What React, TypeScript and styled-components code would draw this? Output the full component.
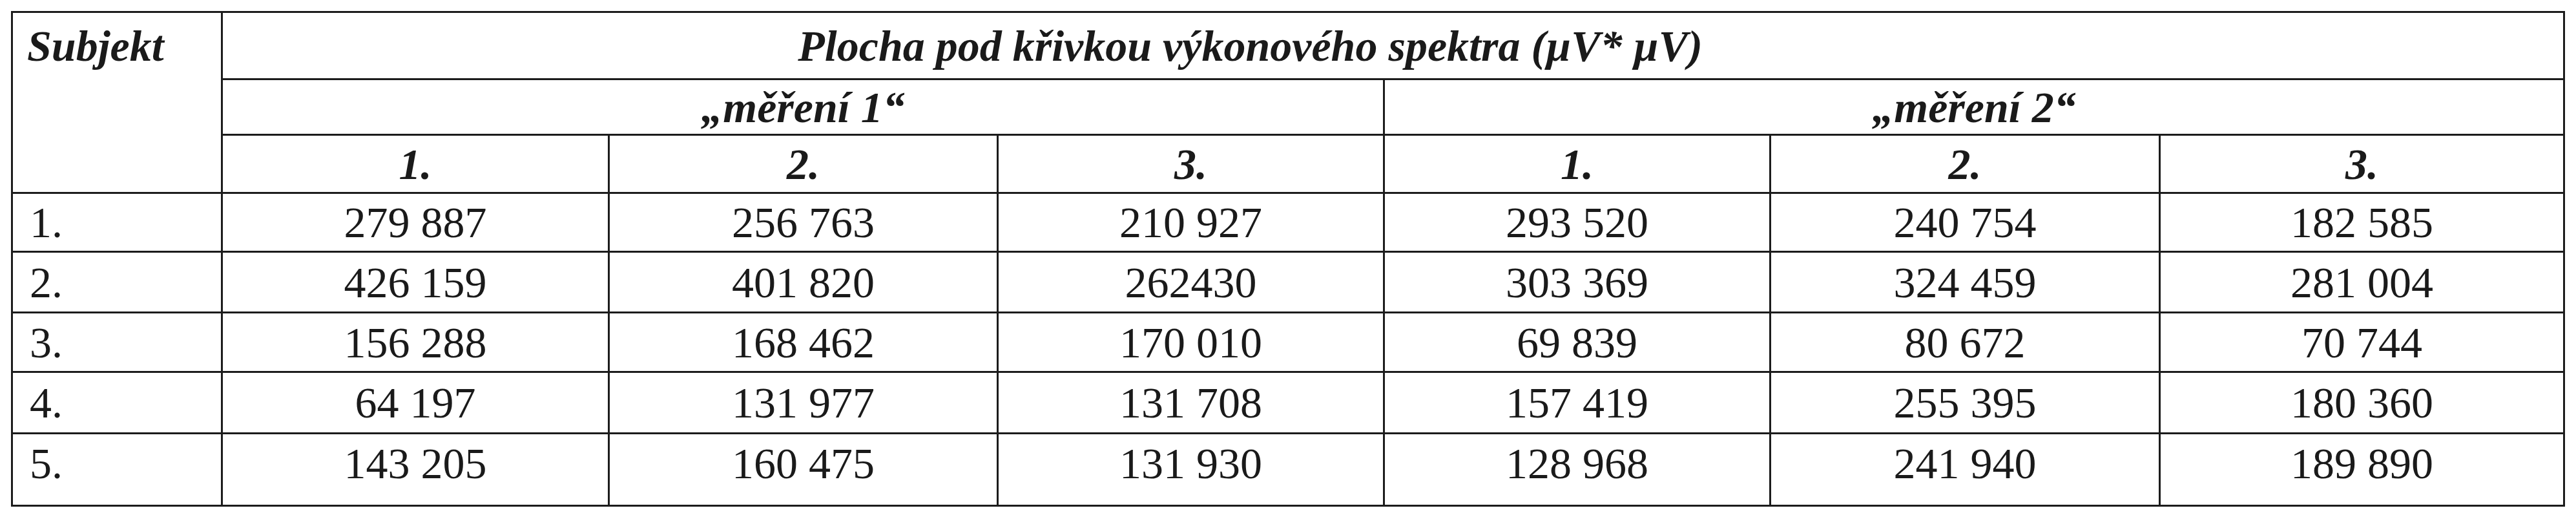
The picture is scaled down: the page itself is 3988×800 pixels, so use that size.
import React from 'react';
import styled, { createGlobalStyle } from 'styled-components';

const GlobalStyle = createGlobalStyle`
  html, body {
    margin: 0;
    padding: 0;
    background: #ffffff;
  }
`;

const Page = styled.div`
  padding: 17px 0 0 17px;
  font-family: 'Liberation Serif', 'Times New Roman', serif;
  color: #1a1a1a;
`;

const Table = styled.table`
  border-collapse: collapse;
  table-layout: fixed;
  width: 3951px;
  font-size: 68px;
  line-height: 1;
`;

const Row = styled.tr<{ $h: number }>`
  height: ${p => p.$h}px;
`;

const Cell = styled.td<{ $align?: 'left' | 'center'; $last?: boolean }>`
  border: 3px solid #1c1c1c;
  padding: 0 0 ${p => (p.$last ? 20 : 0)}px ${p => (p.$align === 'left' ? 26 : 0)}px;
  text-align: ${p => p.$align || 'center'};
  vertical-align: middle;
  white-space: nowrap;
`;

const HeadCell = styled.th<{ $offset?: number }>`
  border: 3px solid #1c1c1c;
  padding: 0 ${p => p.$offset || 0}px 0 0;
  font-weight: bold;
  font-style: italic;
  text-align: center;
  vertical-align: middle;
  white-space: nowrap;
`;

const CornerCell = styled.th`
  border: 3px solid #1c1c1c;
  padding: 17px 0 0 22px;
  font-weight: bold;
  font-style: italic;
  text-align: left;
  vertical-align: top;
`;

const colWidths = [325, 599, 602, 598, 598, 603, 626];
const rowHeights = [91, 94, 92, 95, 112];

const rows: { id: string; values: string[] }[] = [
  { id: '1.', values: ['279 887', '256 763', '210 927', '293 520', '240 754', '182 585'] },
  { id: '2.', values: ['426 159', '401 820', '262430', '303 369', '324 459', '281 004'] },
  { id: '3.', values: ['156 288', '168 462', '170 010', '69 839', '80 672', '70 744'] },
  { id: '4.', values: ['64 197', '131 977', '131 708', '157 419', '255 395', '180 360'] },
  { id: '5.', values: ['143 205', '160 475', '131 930', '128 968', '241 940', '189 890'] },
];

const App: React.FC = () => {
  return (
    <Page>
      <GlobalStyle />
      <Table>
        <colgroup>
          {colWidths.map((w, i) => (
            <col key={i} style={{ width: w }} />
          ))}
        </colgroup>
        <thead>
          <Row $h={104}>
            <CornerCell rowSpan={3}>Subjekt</CornerCell>
            <HeadCell colSpan={6} $offset={442}>
              Plocha pod křivkou výkonového spektra (µV* µV)
            </HeadCell>
          </Row>
          <Row $h={86}>
            <HeadCell colSpan={3}>„měření 1“</HeadCell>
            <HeadCell colSpan={3}>„měření 2“</HeadCell>
          </Row>
          <Row $h={90}>
            {['1.', '2.', '3.', '1.', '2.', '3.'].map((n, i) => (
              <HeadCell key={i}>{n}</HeadCell>
            ))}
          </Row>
        </thead>
        <tbody>
          {rows.map((r, i) => {
            const last = i === rows.length - 1;
            return (
              <Row key={r.id} $h={rowHeights[i]}>
                <Cell $align='left' $last={last}>{r.id}</Cell>
                {r.values.map((v, j) => (
                  <Cell key={j} $last={last}>{v}</Cell>
                ))}
              </Row>
            );
          })}
        </tbody>
      </Table>
    </Page>
  );
};

export default App;
